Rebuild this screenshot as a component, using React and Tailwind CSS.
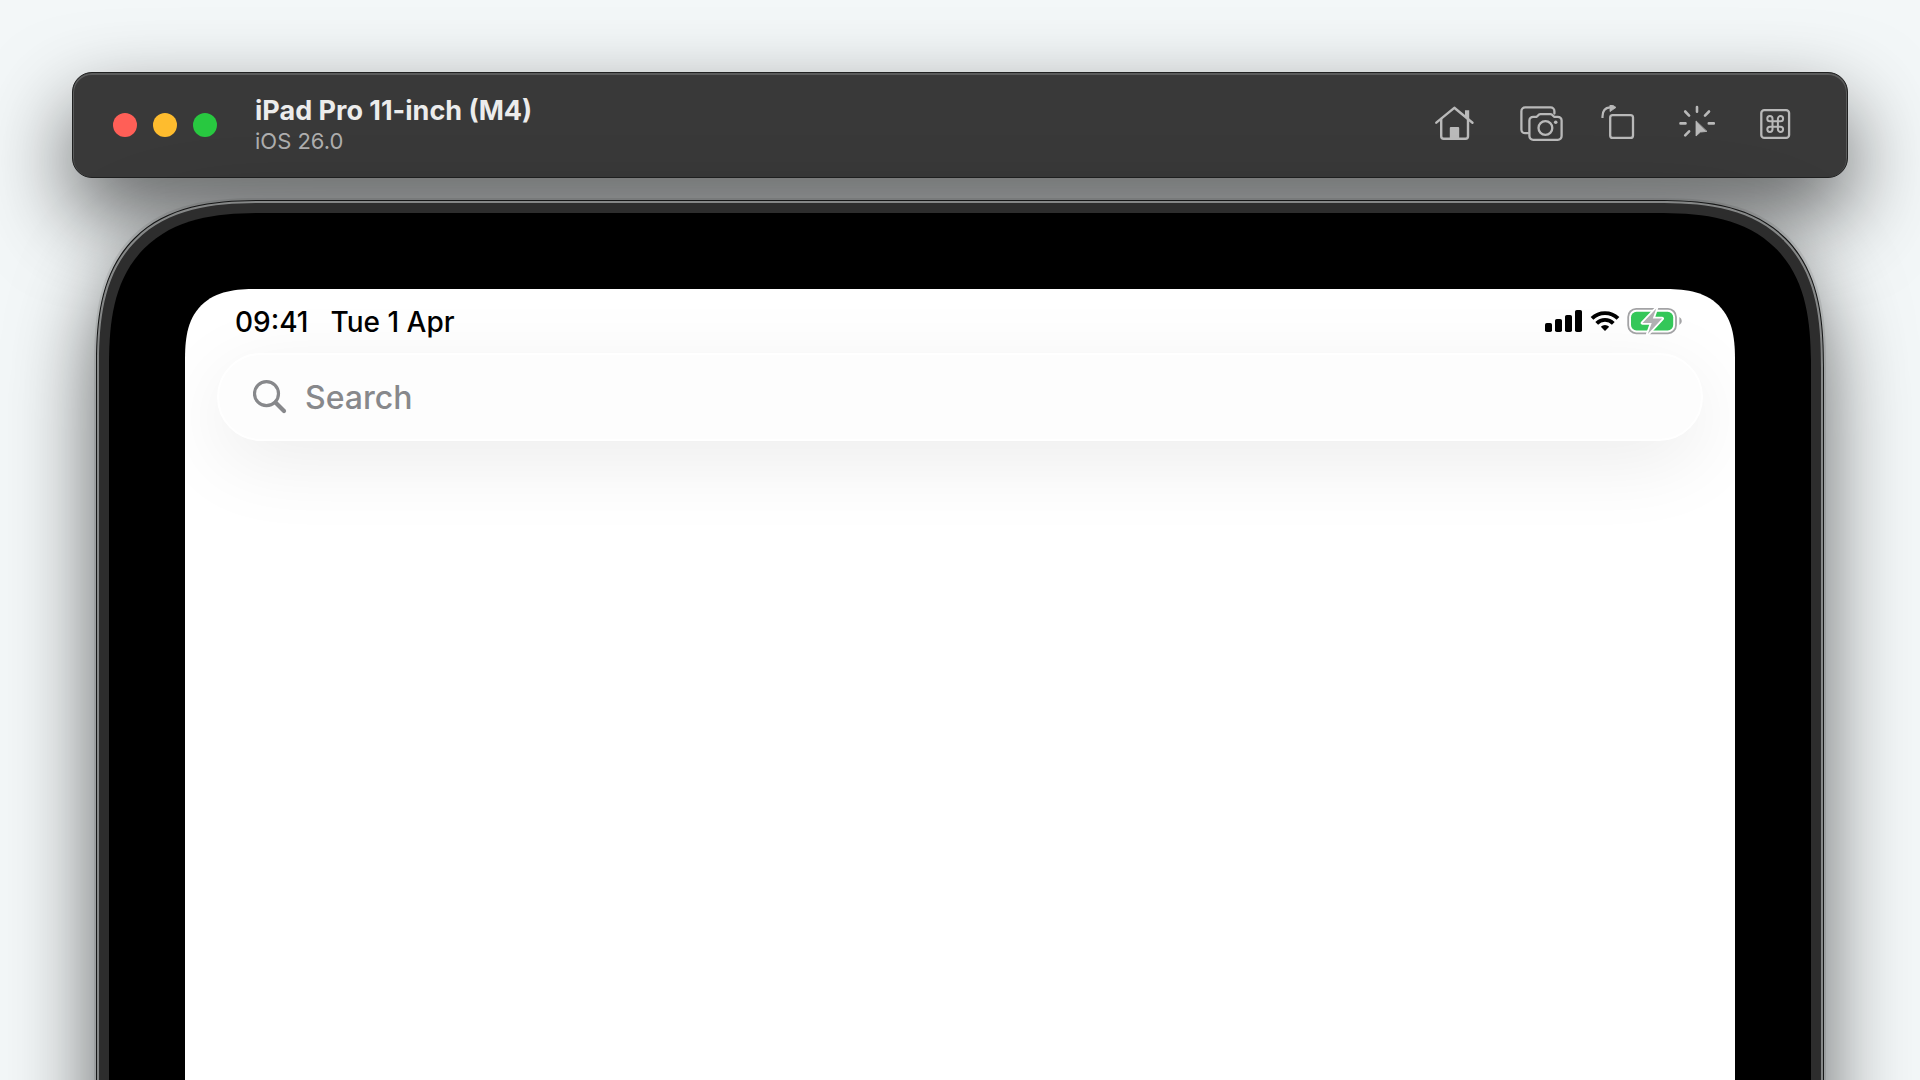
function HomeIcon() {
  return (
    <svg viewBox="0 1 54 40" className="h-10 w-[54px]" fill="none" stroke="currentColor" strokeWidth="2.4" strokeLinecap="round" strokeLinejoin="round" aria-hidden="true">
      <path d="M4.300 18.700 22.300 3.800 40.500 18.700" />
      <path d="M9.200 15v17.300a2.500 2.500 0 0 0 2.500 2.500h21.800a2.500 2.500 0 0 0 2.500-2.500V15" />
      <path d="M33 6.200h4.200v10.200L33 13z" fill="currentColor" stroke="none" />
      <path d="M17.800 35V24a1 1 0 0 1 1-1h7.400a1 1 0 0 1 1 1v11z" fill="currentColor" stroke="none" />
    </svg>
  );
}

function CameraIcon() {
  return (
    <svg viewBox="0 1 44 40" className="h-10 w-11" fill="none" stroke="currentColor" strokeWidth="2.300" strokeLinecap="round" strokeLinejoin="round" aria-hidden="true">
      <path d="M8 29.200H5.200a3.800 3.800 0 0 1-3.800-3.800V7.200a3.800 3.800 0 0 1 3.800-3.800h25.400a3.800 3.800 0 0 1 3.800 3.800v2.400" />
      <path d="M13.200 12.800h3.500l2.100-2.100a2.800 2.800 0 0 1 1.800-.6h9.600a2.800 2.800 0 0 1 1.800.6l2.100 2.100h3.700a3.800 3.800 0 0 1 3.800 3.800v15.500a3.800 3.800 0 0 1-3.800 3.800H13.200a3.800 3.800 0 0 1-3.800-3.800V16.600a3.800 3.800 0 0 1 3.800-3.800z" />
      <circle cx="25.400" cy="24" r="6.900" />
      <circle cx="35.700" cy="18.300" r="1.800" fill="currentColor" stroke="none" />
    </svg>
  );
}

function RotateIcon() {
  return (
    <svg viewBox="0 1 43 40" className="h-10 w-[43px]" fill="none" stroke="currentColor" strokeWidth="2.300" strokeLinejoin="round" aria-hidden="true">
      <rect x="12.200" y="11.100" width="22.800" height="22.800" rx="2.500" />
      <path d="M4.500 14v-1.500q0-8.700 7.500-9.200" strokeWidth="2.200" />
      <path d="M12-.6 18 3.400 12 7.600z" fill="currentColor" stroke="currentColor" strokeWidth=".8" />
    </svg>
  );
}

function ClickIcon() {
  return (
    <svg viewBox="0 1 45 40" className="h-10 w-[45px]" fill="none" stroke="currentColor" strokeWidth="2.600" strokeLinecap="round" aria-hidden="true">
      <path d="M22 3v4.800M5.500 19.400h5M33.800 19.400h5M10.200 7.500l3.900 4.100M34 7.500 30 11.600M10.200 31.400l3.900-4.100" />
      <path d="M21 17.300v14.700l4.400-3.900 6.200-.7z" fill="currentColor" stroke="currentColor" strokeWidth=".8" strokeLinejoin="round" />
    </svg>
  );
}

function CommandIcon() {
  return (
    <svg viewBox="0 1 44 40" className="h-10 w-11" fill="none" stroke="currentColor" strokeWidth="2.300" aria-hidden="true">
      <rect x="7.300" y="6.100" width="27.800" height="27.800" rx="3" />
      <path d="M18.500 17.300h5.400v5.400h-5.400zM18.500 17.300h-2.600a2.600 2.600 0 1 1 2.600-2.600zM23.900 17.300v-2.600a2.600 2.600 0 1 1 2.600 2.600zM23.900 22.700h2.600a2.600 2.600 0 1 1-2.600 2.600zM18.500 22.700v2.600a2.600 2.600 0 1 1-2.600-2.600z" strokeWidth="2" strokeLinejoin="round" />
    </svg>
  );
}

function SignalIcon() {
  return (
    <svg viewBox="0 0 38 24" className="h-6 w-[38px]" aria-label="Signal strength">
      <rect x="0" y="14" width="7" height="9" rx="1.800" />
      <rect x="10" y="10" width="7" height="13" rx="1.800" />
      <rect x="20" y="6" width="7" height="17" rx="1.800" />
      <rect x="30" y="1" width="7" height="22" rx="1.800" />
    </svg>
  );
}

function WifiIcon() {
  return (
    <svg viewBox="0 0 30 22" className="h-[22px] w-[30px]" fill="none" stroke="#000" strokeWidth="3.900" aria-label="Wi-Fi">
      <path d="M2 8.400a18.600 18.600 0 0 1 26 0" />
      <path d="M6.700 13.300a11.800 11.800 0 0 1 16.600 0" />
      <path d="M15 20.900l-4.200-4.200a6 6 0 0 1 8.400 0z" fill="#000" stroke="none" />
    </svg>
  );
}

function BatteryIcon() {
  return (
    <svg viewBox="0 0 56 28" className="h-7 w-14" fill="none" aria-label="Battery charging">
      <rect x="1.200" y="1.900" width="47.800" height="24.400" rx="8" stroke="#a3a3a5" strokeWidth="1.800" />
      <path d="M52.400 10v8q2.400-1.300 2.400-4t-2.400-4z" fill="#a3a3a5" />
      <rect x="4" y="4.800" width="42.200" height="18.600" rx="5.500" fill="#34c759" />
      <path d="M29.300 1.400 15.500 16h9.200L20.800 27 35.200 11.600h-9.400z" fill="#b0b0b2" stroke="#fff" strokeWidth="3.600" strokeLinejoin="round" paintOrder="stroke" />
    </svg>
  );
}

function SearchIcon() {
  return (
    <svg viewBox="0 0 34 34" className="size-[34px] shrink-0" fill="none" stroke="#87888b" aria-hidden="true">
      <circle cx="13.500" cy="13.700" r="12" strokeWidth="3.200" />
      <path d="M22.500 22.500 31 31" strokeWidth="4.200" strokeLinecap="round" />
    </svg>
  );
}

const tools = [
  { label: "Home", Icon: HomeIcon },
  { label: "Screenshot", Icon: CameraIcon },
  { label: "Rotate", Icon: RotateIcon },
  { label: "Show touches", Icon: ClickIcon },
  { label: "Keyboard shortcuts", Icon: CommandIcon },
];

function Toolbar() {
  return (
    <header className="flex h-[106px] shrink-0 items-center rounded-[20px] border border-[#202121] bg-[#393939] pr-[49px] pl-10 shadow-[inset_0_1px_0_1px_#5a5b5b,0_36px_84px_rgba(0,0,0,0.62)]">
      <div className="flex gap-4">
        <button aria-label="Close" className="size-6 rounded-full bg-[#ff5f57]" />
        <button aria-label="Minimize" className="size-6 rounded-full bg-[#febc2e]" />
        <button aria-label="Zoom" className="size-6 rounded-full bg-[#28c840]" />
      </div>
      <div className="ml-[38px] grow">
        <h1 className="text-[27px] leading-8 font-bold text-[#ececec]">iPad Pro 11-inch (M4)</h1>
        <p className="text-[22px] leading-7 text-[#aeaeae]">iOS 26.0</p>
      </div>
      <nav className="flex gap-[34px] text-[#b9b9b9]">
        {tools.map(({ label, Icon }) => (
          <button key={label} aria-label={label}>
            <Icon />
          </button>
        ))}
      </nav>
    </header>
  );
}

function StatusBar() {
  return (
    <div className="flex h-16 items-center justify-between pr-[52px] pl-[50px] text-[28px] leading-8 font-medium text-black">
      <div className="flex gap-[22px] pt-0.5">
        <span>09:41</span>
        <span>Tue 1 Apr</span>
      </div>
      <div className="flex items-center gap-[7px]">
        <SignalIcon />
        <WifiIcon />
        <BatteryIcon />
      </div>
    </div>
  );
}

export default function App() {
  return (
    <div className="flex h-screen flex-col overflow-hidden bg-[#f3f7f8] px-[72px] pt-[72px] font-['Inter','Liberation_Sans',sans-serif]">
      <Toolbar />
      <main className="relative mx-6 mt-[22px] -mb-24 flex grow flex-col rounded-t-[128px] border border-b-0 border-[#161717] bg-[#858787] px-0.5 pt-0.5 shadow-[0_0_0_2px_rgba(0,0,0,0.08),0_36px_84px_rgba(0,0,0,0.62)] supports-[corner-shape:squircle]:rounded-t-[168px] supports-[corner-shape:squircle]:[corner-shape:superellipse(1.43)]">
        <div className="flex grow flex-col rounded-t-[125px] border-x-[10px] border-t-[10px] border-[#2d2d2d] bg-black px-[76px] pt-[76px] supports-[corner-shape:squircle]:rounded-t-[165px] supports-[corner-shape:squircle]:[corner-shape:superellipse(1.43)]">
          <div className="grow overflow-hidden rounded-t-[52px] bg-white supports-[corner-shape:squircle]:rounded-t-[72px] supports-[corner-shape:squircle]:[corner-shape:superellipse(1.43)]">
            <StatusBar />
            <label className="mx-8 flex h-[88px] items-center gap-[18px] rounded-full border-2 border-white bg-[#fdfdfd] px-[34px] shadow-[0_20px_80px_rgba(0,0,0,0.08)]">
              <SearchIcon />
              <input
                type="search"
                aria-label="Search"
                placeholder="Search"
                className="h-12 min-w-0 grow bg-transparent pt-0.5 text-[32px] font-medium text-black outline-none placeholder:text-[#87888b]"
              />
            </label>
          </div>
        </div>
      </main>
    </div>
  );
}
